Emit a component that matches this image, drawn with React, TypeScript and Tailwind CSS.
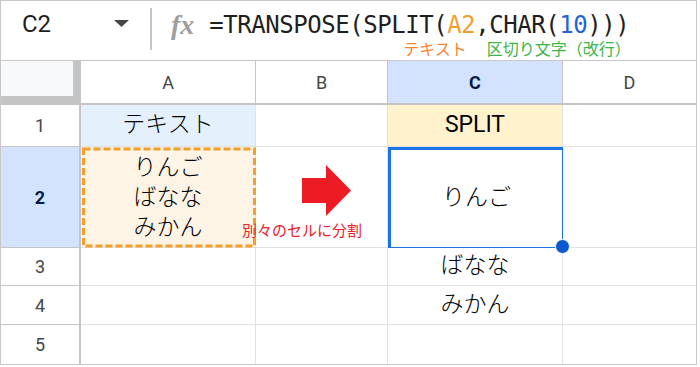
import React from 'react';

const jp = "font-['Roboto','Noto_Sans_CJK_JP',sans-serif]";

function HeadCell({ label, active, last }: { label: string; active?: boolean; last?: boolean }) {
  return (
    <div
      className={`flex items-center justify-center border-b-2 border-[#c4c4c4] text-[18px] ${last ? '' : 'border-r'} ${
        active ? 'bg-[#d3e3fd] font-bold text-[#041e49]' : 'bg-white text-[#444746]'
      } font-['Roboto',sans-serif]`}
    >
      {label}
    </div>
  );
}

function RowHead({ n, active, last }: { n: number; active?: boolean; last?: boolean }) {
  return (
    <div
      className={`flex items-center justify-center border-r-2 border-[#c4c4c4] text-[18px] font-['Roboto',sans-serif] ${
        last ? '' : 'border-b'
      } ${active ? 'bg-[#d3e3fd] font-bold text-[#041e49]' : 'bg-white text-[#444746]'}`}
    >
      {n}
    </div>
  );
}

function Cell({ children, className = '', last, lastRow }: { children?: React.ReactNode; className?: string; last?: boolean; lastRow?: boolean }) {
  return (
    <div
      className={`flex items-center justify-center border-[#e1e1e1] text-[23px] font-light text-black ${jp} ${last ? '' : 'border-r'} ${
        lastRow ? '' : 'border-b'
      } ${className}`}
    >
      {children}
    </div>
  );
}

export default function App() {
  return (
    <div className="w-[700px] h-[367px] bg-white">
      <div className="relative w-[697px] h-[365px] border border-[#c8c8c8] bg-white flex flex-col">
        {/* formula bar */}
        <div className="h-[60px] border-b border-[#c8c8c8] flex items-start shrink-0">
          <div className="w-[149px] flex items-start">
            <span className="ml-[21px] mt-[9px] text-[24px] leading-[28px] text-[#1f1f1f] font-['Roboto',sans-serif]">C2</span>
            <svg className="ml-auto mr-[21px] mt-[19px]" width="15" height="7" viewBox="0 0 15 7">
              <polygon points="0,0 15,0 7.5,7" fill="#444746" />
            </svg>
          </div>
          <div className="w-[2px] h-[42px] mt-[7px] bg-[#c4c4c4]" />
          <span className="ml-[19px] mt-[10px] text-[28px] leading-[28px] italic font-bold text-[#9e9e9e] font-['Liberation_Serif',serif]">
            fx
          </span>
          <div className="ml-[15px] mt-[11px] flex flex-col">
            <div className="text-[24px] leading-[26px] tracking-[-0.45px] text-[#1f1f1f] font-['DejaVu_Sans_Mono',monospace] whitespace-nowrap">
              =TRANSPOSE(SPLIT(<span className="text-[#f29f30]">A2</span>,CHAR(<span className="text-[#2563d8]">10</span>)))
            </div>
            <div className="flex mt-[1px] ml-[194px] text-[16px] leading-[18px] font-['Noto_Sans_CJK_JP',sans-serif] whitespace-nowrap">
              <span className="text-[#fa8434]">テキスト</span>
              <span className="ml-[20px] text-[#3cb44b]">区切り文字（改行）</span>
            </div>
          </div>
        </div>

        {/* sheet grid */}
        <div className="grid grid-cols-[80px_175px_132px_175px_133px] grid-rows-[44px_42px_101px_38px_39px_39px]">
          <div className="bg-[#f8f9fa] border-r-[8px] border-b-[9px] border-[#c4c4c4]" />
          <HeadCell label="A" />
          <HeadCell label="B" />
          <HeadCell label="C" active />
          <HeadCell label="D" last />

          <RowHead n={1} />
          <Cell className="bg-[#e4f1fd]">テキスト</Cell>
          <Cell />
          <Cell className="bg-[#fff2cc] text-[22px] !font-normal">SPLIT</Cell>
          <Cell last />

          <RowHead n={2} active />
          <Cell className="relative bg-[#fdf4e6] flex-col leading-[30px] pt-[2px]">
            <span>りんご</span>
            <span>ばなな</span>
            <span>みかん</span>
            <svg className="absolute inset-0" width="175" height="101" viewBox="0 0 175 101">
              <rect x="2.5" y="2" width="171" height="97" fill="none" stroke="#f59e2b" strokeWidth="3" strokeDasharray="7 3" />
            </svg>
          </Cell>
          <Cell className="!items-start !justify-start pt-[18px] pl-[46px]">
            <svg width="50" height="51" viewBox="0 0 50 51">
              <polygon points="0,13 24,13 24,0 49,25.5 24,51 24,38 0,38" fill="#ed1c24" />
            </svg>
          </Cell>
          <Cell className="border-[3px] !border-[#1a73e8]">りんご</Cell>
          <Cell last />

          <RowHead n={3} />
          <Cell />
          <Cell />
          <Cell>ばなな</Cell>
          <Cell last />

          <RowHead n={4} />
          <Cell />
          <Cell />
          <Cell>みかん</Cell>
          <Cell last />

          <RowHead n={5} last />
          <Cell lastRow />
          <Cell lastRow />
          <Cell lastRow />
          <Cell last lastRow />
        </div>

        {/* overlays */}
        <span className="absolute left-[241px] top-[220px] text-[15px] leading-[18px] text-[#e8212a] font-['Noto_Sans_CJK_JP',sans-serif] whitespace-nowrap">
          別々のセルに分割
        </span>
        <div className="absolute left-[554px] top-[238px] w-[15px] h-[15px] rounded-full bg-[#0b57d0] border border-white" />
      </div>
    </div>
  );
}
